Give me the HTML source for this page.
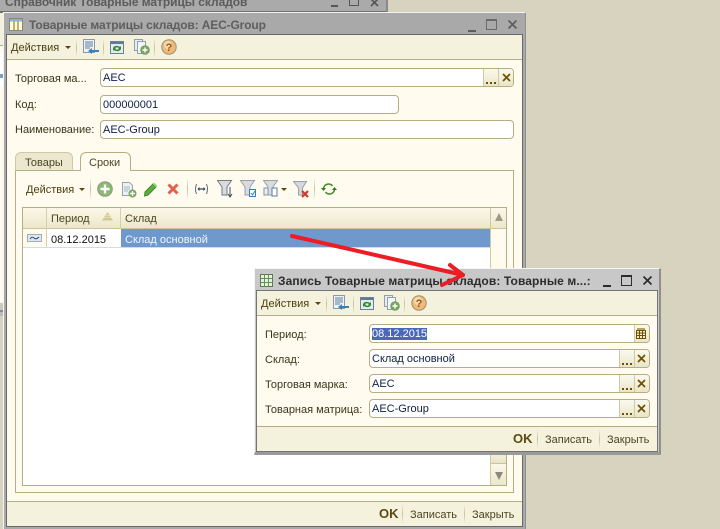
<!DOCTYPE html>
<html><head><meta charset="utf-8">
<style>
html,body{margin:0;padding:0}
body{width:720px;height:529px;overflow:hidden;position:relative;background:#d8d3be;font:11px "Liberation Sans",Arial,sans-serif;color:#2d2a12}
div,span.a,svg.a{position:absolute;box-sizing:border-box}
.t{white-space:nowrap;line-height:14px;margin-top:1px}
.f{background:#fff;border:1px solid #b6ad82;border-radius:4px;color:#0f1f45;padding:0 0 0 2px;line-height:18px;white-space:nowrap;height:19px}
.b{top:0;bottom:0;background:linear-gradient(#fbf9ee,#eae5c8);border-left:1px solid #cfc8a4}
.sep{width:1px;height:20px;background:linear-gradient(#f5f2e2,#c9c19b,#f5f2e2)}
.d{top:13px;width:11px;height:2px;background:repeating-linear-gradient(90deg,#6e5200 0 2px,transparent 2px 4px)}
</style></head><body>
<svg width="0" height="0" style="position:absolute">
<defs>
<symbol id="wr" viewBox="0 0 18 16"><rect x="1.5" y=".5" width="11" height="13" fill="#eef2f6" stroke="#8c9aa8"/><path d="M3 3h8M3 5h8M3 7h8M3 9h5" stroke="#5d7d9f"/><path d="M6 12l4-3v2h7v2h-7v2z" fill="#3a80b8"/></symbol>
<symbol id="ref" viewBox="0 0 16 16"><rect x=".5" y="1.5" width="13" height="12" fill="#e4eaef" stroke="#6f8091"/><rect x="1" y="2" width="12" height="2" fill="#5a7c9a"/><path d="M3 8a4 3 0 0 1 7-1l1-1v3H8l1-1a3 2 0 0 0-5 1zM11 9a4 3 0 0 1-7 1l-1 1V8h3l-1 1a3 2 0 0 0 5-1z" fill="#2d8a2d"/></symbol>
<symbol id="cp" viewBox="0 0 16 16"><rect x=".5" y=".5" width="8" height="11" fill="#e8edf2" stroke="#93a0ac"/><rect x="3.5" y="2.5" width="8" height="12" fill="#f3f5f7" stroke="#93a0ac"/><circle cx="11" cy="11" r="4.3" fill="#74a85e" stroke="#7d9a70"/><path d="M11 8.5v5M8.5 11h5" stroke="#fff" stroke-width="1.4"/></symbol>
<symbol id="hp" viewBox="0 0 16 16"><circle cx="8" cy="8" r="7.2" fill="#f2b878" stroke="#9a9274"/><circle cx="7" cy="6" r="4" fill="#f8d9ae"/><text x="8" y="12" font-size="11" font-weight="bold" text-anchor="middle" fill="#8a5a20" font-family="Liberation Sans">?</text></symbol>
<symbol id="x" viewBox="0 0 9 9"><path d="M1 1l7 7M8 1L1 8" stroke="#6e5200" stroke-width="1.7"/></symbol>
</defs></svg>

<!-- back window -->
<div style="left:0;top:0;width:388px;height:13px;background:#aaa;border-right:2px solid #8a8a8a"></div>
<div class="t" style="left:5px;top:-5px;margin-top:0;font-weight:bold;color:#5c5c5c;font-size:12px;letter-spacing:-.05px">Справочник Товарные матрицы складов</div>
<div style="left:331px;top:5px;width:7px;height:2px;background:#555"></div>
<div style="left:349px;top:-4px;width:10px;height:10px;border:1px solid #555;border-top:0"></div>
<svg class="a" style="left:370px;top:-2px" width="9" height="9" viewBox="0 0 9 9"><path d="M1 1l7 7M8 1L1 8" stroke="#555" stroke-width="1.6"/></svg>
<div style="left:0;top:11px;width:386px;height:2px;background:#6f6f6f"></div>
<div style="left:0;top:13px;width:4px;height:303px;background:#fffbef"></div>
<div style="left:0;top:13px;width:4px;height:33px;background:#f3f0dc"></div>
<div style="left:0;top:45px;width:4px;height:1px;background:#b6ad82"></div>
<div style="left:0;top:54px;width:4px;height:32px;background:#fff"></div>
<div style="left:0;top:74px;width:3px;height:4px;background:#7da0c0"></div>
<div style="left:0;top:303px;width:4px;height:7px;background:#c9c9bd"></div>
<div style="left:0;top:310px;width:4px;height:2px;background:#888"></div>
<div style="left:0;top:312px;width:4px;height:4px;background:#bbb"></div>
<div style="left:0;top:316px;width:4px;height:213px;background:#d8d3be"></div>

<!-- main window -->
<div style="left:3px;top:12px;width:523px;height:517px;background:#a9a9a9;border-left:1px solid #f4f4f4;border-top:1px solid #f4f4f4;border-right:1px solid #8f8f8f"></div>
<div style="left:6px;top:34px;width:517px;height:493px;background:#fffbef;border:1px solid #696969"></div>
<svg class="a" style="left:9px;top:18px" width="14" height="13" viewBox="0 0 14 13"><rect x=".5" y=".5" width="13" height="12" fill="#fdfbe6" stroke="#8a8a6a"/><rect x="1" y="1" width="12" height="2.5" fill="#8ab0d8"/><path d="M5 3v9M9 3v9" stroke="#b59a40" stroke-width="1.5"/></svg>
<div class="t" style="left:29px;top:18px;margin-top:0;font-size:12px;font-weight:bold;color:#5e5e5e;letter-spacing:-.14px">Товарные матрицы складов: AEC-Group</div>
<div style="left:468px;top:30px;width:8px;height:2px;background:#5d5d5d"></div>
<div style="left:486px;top:19px;width:11px;height:11px;border:1px solid #6a6a6a;border-top-width:2px"></div>
<svg class="a" style="left:508px;top:20px" width="9" height="9" viewBox="0 0 9 9"><path d="M.5.5l8 8M8.5.5l-8 8" stroke="#5d5d5d" stroke-width="1.7"/></svg>

<!-- toolbar -->
<div style="left:7px;top:35px;width:515px;height:25px;background:#f4f1dd;border-bottom:1px solid #b6ad82"></div>
<div class="t" style="left:11px;top:40px;color:#4a3f10">Действия</div>
<div style="left:65px;top:46px;border:3px solid transparent;border-top:3px solid #5a4510;border-bottom:0"></div>
<div class="sep" style="left:76px;top:38px"></div>
<svg class="a" style="left:82px;top:39px" width="18" height="16"><use href="#wr"/></svg>
<div class="sep" style="left:103px;top:38px"></div>
<svg class="a" style="left:110px;top:40px" width="16" height="16"><use href="#ref"/></svg>
<svg class="a" style="left:134px;top:39px" width="16" height="16"><use href="#cp"/></svg>
<div class="sep" style="left:154px;top:38px"></div>
<svg class="a" style="left:161px;top:39px" width="16" height="16"><use href="#hp"/></svg>

<!-- fields -->
<div class="t" style="left:15px;top:71px;color:#3a3518">Торговая ма...</div>
<div class="f" style="left:100px;top:68px;width:414px">AEC
 <div class="b" style="right:15px;width:15px"></div><div class="b" style="right:0;width:15px;border-radius:0 3px 3px 0"></div>
 <div class="d" style="left:385px"></div>
 <svg class="a" style="left:401px;top:4px" width="9" height="9"><use href="#x"/></svg>
</div>
<div class="t" style="left:15px;top:97px;color:#3a3518">Код:</div>
<div class="f" style="left:100px;top:95px;width:299px">000000001</div>
<div class="t" style="left:15px;top:122px;color:#3a3518">Наименование:</div>
<div class="f" style="left:100px;top:120px;width:414px">AEC-Group</div>

<!-- tabs -->
<div style="left:15px;top:170px;width:499px;height:323px;border:1px solid #b6ad82"></div>
<div style="left:15px;top:152px;width:58px;height:19px;background:#ece8d0;border:1px solid #cfc8a4;border-bottom:1px solid #b6ad82;border-radius:6px 6px 0 0"></div>
<div class="t" style="left:25px;top:155px;color:#4a4520">Товары</div>
<div style="left:80px;top:152px;width:51px;height:19px;background:#fffbef;border:1px solid #b6ad82;border-bottom:0;border-radius:6px 6px 0 0"></div>
<div class="t" style="left:89px;top:155px;color:#4a4520">Сроки</div>

<!-- list toolbar -->
<div class="t" style="left:26px;top:182px;color:#4a3f10">Действия</div>
<div style="left:79px;top:188px;border:3px solid transparent;border-top:3px solid #5a4510;border-bottom:0"></div>
<div class="sep" style="left:90px;top:179px"></div>
<svg class="a" style="left:97px;top:181px" width="16" height="16" viewBox="0 0 16 16"><circle cx="8" cy="8" r="7.3" fill="#8cb874" stroke="#8a9a80"/><path d="M8 3.5v9M3.5 8h9" stroke="#fff" stroke-width="2.4"/></svg>
<svg class="a" style="left:121px;top:182px" width="16" height="16" viewBox="0 0 16 16"><path d="M1.500 .5h7l3 3v10h-10z" fill="#eef1f4" stroke="#98a4ae"/><path d="M3 5h6M3 7h6M3 9h4" stroke="#a7b8c6"/><circle cx="11.500" cy="11.500" r="4" fill="#74a85e"/><path d="M11.500 9v5M9 11.500h5" stroke="#fff" stroke-width="1.400"/></svg>
<svg class="a" style="left:144px;top:182px" width="14" height="15" viewBox="0 0 14 15"><path d="M1 10l8-8 3 3-8 8-3.500 1z" fill="#5cae3c" stroke="#3f8a2a"/><path d="M9.500 1.500l3 3" stroke="#8ed070" stroke-width="2"/></svg>
<svg class="a" style="left:167px;top:183px" width="12" height="12" viewBox="0 0 12 12"><path d="M1.500 1.500l9 9M10.500 1.500l-9 9" stroke="#e0614c" stroke-width="3"/></svg>
<div class="sep" style="left:187px;top:179px"></div>
<svg class="a" style="left:194px;top:183px" width="15" height="12" viewBox="0 0 15 12"><path d="M2.500 1Q.5 6 2.500 11M12.500 1Q14.500 6 12.500 11" fill="none" stroke="#5a6a7a"/><path d="M4 6h7" stroke="#2f3f55" stroke-width="1.200"/><path d="M5.500 4L3.500 6l2 2zM9.500 4l2 2-2 2z" fill="#2f3f55"/></svg>
<svg class="a" style="left:217px;top:180px" width="18" height="18" viewBox="0 0 18 18"><path d="M.5.5h14L10 7v8H5V7z" fill="#d8dce0" stroke="#757a80"/><path d="M13 7v9M11 14l2 3 2-3" stroke="#3c4a5a" fill="none"/></svg>
<svg class="a" style="left:240px;top:180px" width="17" height="18" viewBox="0 0 17 18"><path d="M.5.5h14L10 7v8H5V7z" fill="#d8dce0" stroke="#9aa0a6"/><rect x="9.500" y="9.500" width="6" height="7" fill="#fff" stroke="#3a80b8"/><path d="M11 13l1.500 2L15 11" stroke="#3a80b8" fill="none"/></svg>
<svg class="a" style="left:263px;top:180px" width="15" height="18" viewBox="0 0 15 18"><path d="M.5.5h14L10 7v8H5V7z" fill="#d8dce0" stroke="#9aa0a6"/><rect x="1" y="8" width="4" height="7" fill="#eef" stroke="#88929c"/><rect x="9" y="8" width="5" height="8" fill="#fff" stroke="#5a7ca0"/></svg>
<div style="left:281px;top:188px;border:3px solid transparent;border-top:3px solid #5a4510;border-bottom:0"></div>
<svg class="a" style="left:293px;top:181px" width="17" height="17" viewBox="0 0 17 17"><path d="M.5.5h13L9.500 7v7h-4V7z" fill="#d4d8dc" stroke="#9aa0a6"/><path d="M9 10l6 6M15 10l-6 6" stroke="#cf3b2a" stroke-width="2.200"/></svg>
<div class="sep" style="left:314px;top:179px"></div>
<svg class="a" style="left:321px;top:182px" width="16" height="14" viewBox="0 0 16 14"><path d="M2.500 7a5 5 0 0 1 9-3M13.500 7a5 5 0 0 1-9 3" fill="none" stroke="#3f8a2a" stroke-width="1.500"/><path d="M0 6h5l-2.500 3zM16 8h-5l2.500-3z" fill="#2f7a20"/></svg>

<!-- grid -->
<div style="left:22px;top:207px;width:485px;height:279px;background:#fff;border:1px solid #b6ad82"></div>
<div style="left:23px;top:208px;width:483px;height:21px;background:linear-gradient(#fbf8e8,#ece7cb);border-bottom:1px solid #cbc39e"></div>
<div style="left:46px;top:208px;width:1px;height:39px;background:#d6cfaf"></div>
<div style="left:120px;top:208px;width:1px;height:21px;background:#d6cfaf"></div>
<div class="t" style="left:51px;top:211px;color:#4a4520">Период</div>
<svg class="a" style="left:102px;top:212px" width="11" height="9" viewBox="0 0 11 9"><path d="M5.500 0l2 3h-4zM3 3.500h5l1 2H2zM1.500 6h8l1.500 2.500H0z" fill="#d4c995"/></svg>
<div class="t" style="left:125px;top:211px;color:#4a4520">Склад</div>
<div style="left:23px;top:229px;width:23px;height:18px;background:#fffbef"></div>
<svg class="a" style="left:27px;top:234px" width="15" height="8" viewBox="0 0 15 8"><rect x=".5" y=".5" width="14" height="7" fill="#dfe7ef" stroke="#a0acb8"/><path d="M3 5q2-3 4-1t5-1" fill="none" stroke="#30507a"/></svg>
<div class="t" style="left:51px;top:232px;color:#101010">08.12.2015</div>
<div style="left:121px;top:229px;width:370px;height:18px;background:#6f98cc"></div>
<div class="t" style="left:125px;top:232px;color:#f2f6fb">Склад основной</div>
<div style="left:23px;top:247px;width:468px;height:1px;background:#cfdcec"></div>
<!-- scrollbar -->
<div style="left:490px;top:208px;width:16px;height:277px;background:#fffbef;border-left:1px solid #cfc8a4"></div>
<div style="left:491px;top:208px;width:15px;height:21px;background:linear-gradient(#fbf8e8,#ece7cb);border-bottom:1px solid #cbc39e"></div>
<div style="left:495px;top:213px;border:4px solid transparent;border-bottom:8px solid #9b9b8c;border-top:0"></div>
<div style="left:491px;top:455px;width:15px;height:9px;background:linear-gradient(#f2eedb,#e8e3c6);border-bottom:1px solid #cbc39e"></div>
<div style="left:491px;top:464px;width:15px;height:21px;background:linear-gradient(#fbf8e8,#ece7cb)"></div>
<div style="left:495px;top:472px;border:4px solid transparent;border-top:8px solid #8b8b7c;border-bottom:0"></div>

<!-- main footer -->
<div style="left:7px;top:501px;width:515px;height:25px;background:#f4f1dd;border-top:1px solid #b6ad82"></div>
<div class="t" style="left:379px;top:506px;font-weight:bold;font-size:13px;color:#5a4a14">OK</div>
<div class="sep" style="left:402px;top:504px"></div>
<div class="t" style="left:410px;top:507px;color:#4a4520">Записать</div>
<div class="sep" style="left:464px;top:504px"></div>
<div class="t" style="left:472px;top:507px;color:#4a4520">Закрыть</div>

<!-- dialog -->
<div style="left:254px;top:268px;width:407px;height:187px;background:#c8c8c8;border-left:1px solid #f4f4f4;border-top:1px solid #f4f4f4;border-right:2px solid #8f8f8f;border-bottom:3px solid #9a9a9a"></div>
<div style="left:256px;top:290px;width:402px;height:162px;background:#fffbef;border:1px solid #747474"></div>
<svg class="a" style="left:260px;top:274px" width="13" height="13" viewBox="0 0 13 13"><rect x=".5" y=".5" width="12" height="12" fill="#e8f0d8" stroke="#5a7a50"/><path d="M.5 4.500h12M.5 8.500h12M4.500 .5v12M8.500 .5v12" stroke="#5f9060"/></svg>
<div class="t" style="left:278px;top:274px;margin-top:0;font-size:12px;font-weight:bold;color:#2c2c2c;letter-spacing:.1px">Запись Товарные матрицы складов: Товарные м...:</div>
<div style="left:603px;top:285px;width:8px;height:2px;background:#2c2c2c"></div>
<div style="left:621px;top:275px;width:11px;height:11px;border:1px solid #2c2c2c;border-top-width:2px"></div>
<svg class="a" style="left:643px;top:276px" width="9" height="9" viewBox="0 0 9 9"><path d="M.5.5l8 8M8.500.5l-8 8" stroke="#2c2c2c" stroke-width="1.700"/></svg>

<div style="left:257px;top:291px;width:400px;height:25px;background:#f4f1dd;border-bottom:1px solid #b6ad82"></div>
<div class="t" style="left:261px;top:296px;color:#4a3f10">Действия</div>
<div style="left:315px;top:302px;border:3px solid transparent;border-top:3px solid #5a4510;border-bottom:0"></div>
<div class="sep" style="left:326px;top:294px"></div>
<svg class="a" style="left:332px;top:295px" width="18" height="16"><use href="#wr"/></svg>
<div class="sep" style="left:353px;top:294px"></div>
<svg class="a" style="left:360px;top:296px" width="16" height="16"><use href="#ref"/></svg>
<svg class="a" style="left:384px;top:295px" width="16" height="16"><use href="#cp"/></svg>
<div class="sep" style="left:404px;top:294px"></div>
<svg class="a" style="left:411px;top:295px" width="16" height="16"><use href="#hp"/></svg>

<div class="t" style="left:265px;top:327px;color:#3a3518">Период:</div>
<div class="f" style="left:369px;top:324px;width:281px;padding-left:2px"><span style="background:#4a68b8;color:#fff">08.12.2015</span>
 <div class="b" style="right:0;width:15px;border-radius:0 3px 3px 0"></div>
 <svg class="a" style="right:3px;top:3px" width="10" height="11" viewBox="0 0 10 11"><path d="M.5 2.500h9v8h-9zM.5 5h9M.5 7.500h9M3.500 2.500v8M6.500 2.500v8M1 1h8" fill="none" stroke="#6e5200"/></svg>
</div>
<div class="t" style="left:265px;top:352px;color:#3a3518">Склад:</div>
<div class="f" style="left:369px;top:349px;width:281px">Склад основной
 <div class="b" style="right:15px;width:15px"></div><div class="b" style="right:0;width:15px;border-radius:0 3px 3px 0"></div>
 <div class="d" style="left:252px"></div>
 <svg class="a" style="left:267px;top:4px" width="9" height="9"><use href="#x"/></svg>
</div>
<div class="t" style="left:265px;top:377px;color:#3a3518">Торговая марка:</div>
<div class="f" style="left:369px;top:374px;width:281px">AEC
 <div class="b" style="right:15px;width:15px"></div><div class="b" style="right:0;width:15px;border-radius:0 3px 3px 0"></div>
 <div class="d" style="left:252px"></div>
 <svg class="a" style="left:267px;top:4px" width="9" height="9"><use href="#x"/></svg>
</div>
<div class="t" style="left:265px;top:402px;color:#3a3518">Товарная матрица:</div>
<div class="f" style="left:369px;top:399px;width:281px">AEC-Group
 <div class="b" style="right:15px;width:15px"></div><div class="b" style="right:0;width:15px;border-radius:0 3px 3px 0"></div>
 <div class="d" style="left:252px"></div>
 <svg class="a" style="left:267px;top:4px" width="9" height="9"><use href="#x"/></svg>
</div>

<div style="left:257px;top:426px;width:400px;height:25px;background:#f4f1dd;border-top:1px solid #b6ad82"></div>
<div class="t" style="left:513px;top:431px;font-weight:bold;font-size:13px;color:#5a4a14">OK</div>
<div class="sep" style="left:537px;top:429px"></div>
<div class="t" style="left:545px;top:432px;color:#4a4520">Записать</div>
<div class="sep" style="left:599px;top:429px"></div>
<div class="t" style="left:607px;top:432px;color:#4a4520">Закрыть</div>

<!-- arrow -->
<svg class="a" style="left:0;top:0" width="720" height="529"><path d="M292 236L463 275M450 265L463 275L442 285" fill="none" stroke="#ee1c25" stroke-width="4" stroke-linecap="round" stroke-linejoin="round"/></svg>
</body></html>
